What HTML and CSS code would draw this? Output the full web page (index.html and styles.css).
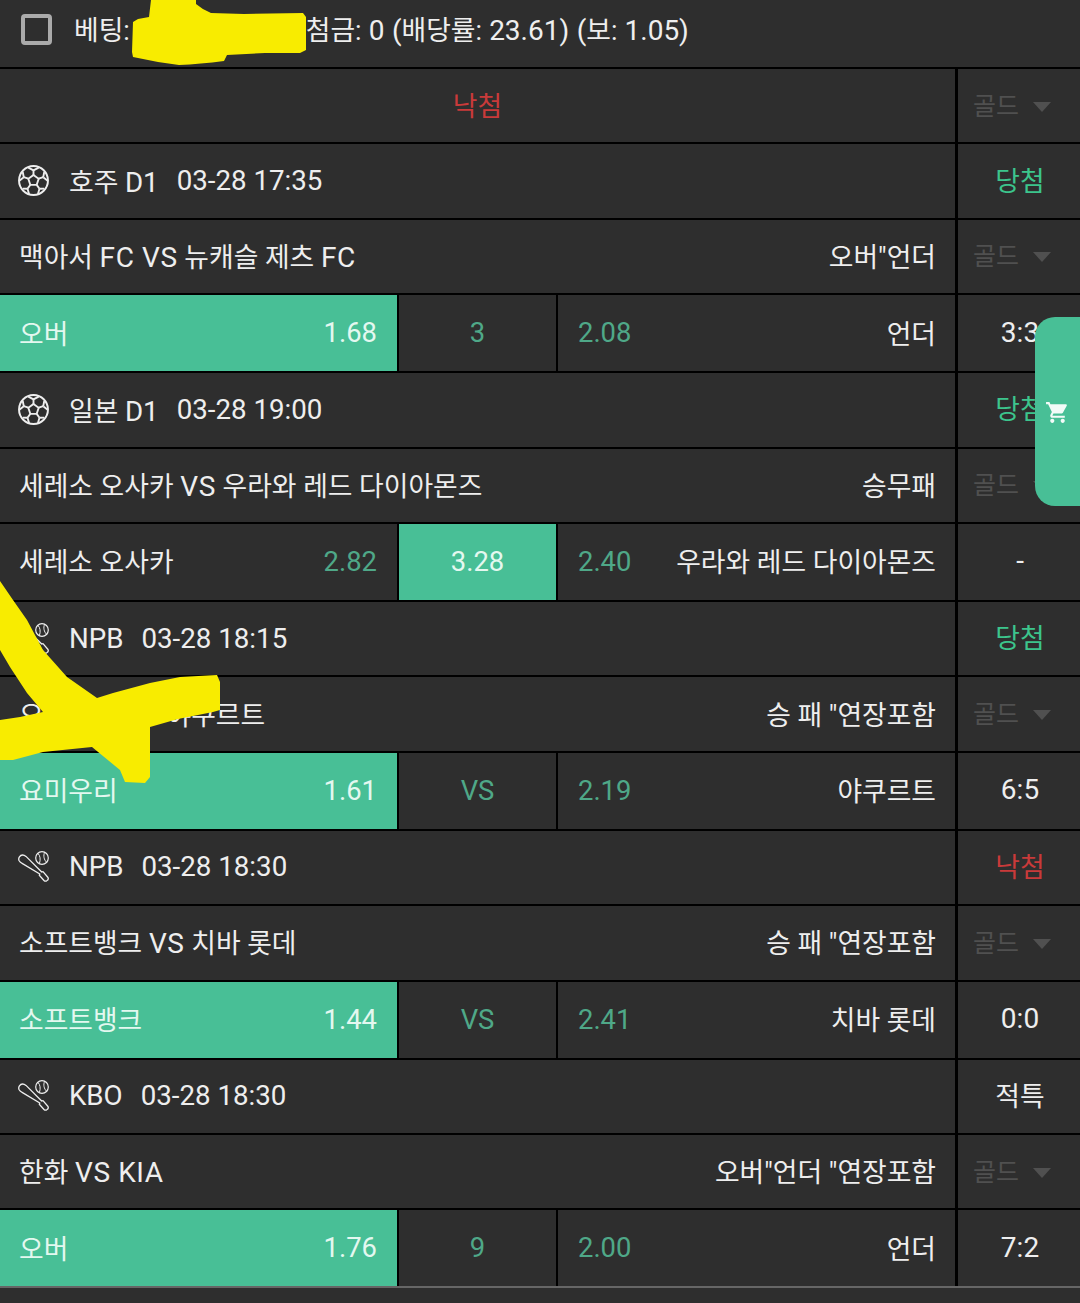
FILE: index.html
```html
<!DOCTYPE html>
<html lang="ko">
<head>
    <meta charset="UTF-8">
    <meta name="viewport" content="width=device-width, initial-scale=1.0">
    <title>베팅 내역</title>
    <link rel="stylesheet" href="styles.css">
</head>
<body>
    <svg width="0" height="0" class="defs">
        <defs>
            <symbol id="icon-soccer" viewBox="0 0 30 30">
                <circle cx="15" cy="15" r="14" fill="none" stroke="currentColor" stroke-width="1.9"/>
                <path d="M15 9.6l5 3.7-1.9 5.900h-6.200L10 13.300z" fill="none" stroke="currentColor" stroke-width="1.8"/>
                <path d="M15 9.600V5.200M20 13.300l4.400-1.500M18.100 19.200l2.700 3.800M11.900 19.200l-2.700 3.800M10 13.300l-4.400-1.500" fill="none" stroke="currentColor" stroke-width="1.800"/>
                <path d="M10 2.600l5 2.600 5-2.600M24.400 11.800l1-5M24.400 11.800l4.300 3.400M20.800 23l4.600-.2M20.800 23l-1.500 5M9.200 23l1.500 5M9.200 23l-4.600-.2M5.600 11.800l-1-5M5.600 11.800L1.300 15.200" fill="none" stroke="currentColor" stroke-width="1.800"/>
            </symbol>
            <symbol id="icon-baseball" viewBox="0 0 31 31">
                <circle cx="24" cy="7" r="6.300" fill="none" stroke="currentColor" stroke-width="1.200"/>
                <path d="M20 2.400c2.200 2.400 2.800 6 1.400 10.200M26.600 1.300c-1.400 3.400-.8 7.400 2.200 10.200" fill="none" stroke="currentColor" stroke-width="1"/>
                <path d="M1 9.500C0 7 2 4 4.500 4 6 4 7 4.600 8 5.400L23.700 21l1.300-.4 5 5.900c.5 1 0 2.500-1.300 3.300-1.200.6-2.200.2-2.700-.3l-4.700-5.200.5-1.300L4.500 12.600C3 11.800 1.700 11 1 9.500z" fill="none" stroke="currentColor" stroke-width="1.300" stroke-linejoin="round"/>
            </symbol>
        </defs>
    </svg>

    <div class="list">
        <div class="top-row">
            <span class="checkbox"></span>
            <span class="top-label">베팅:</span>
            <span class="top-hidden"></span>
            <span>첨금: <span class="n">0 (</span>배당률: <span class="n">23.61) (</span>보: <span class="n">1.05)</span></span>
        </div>

        <div class="row">
            <div class="main center lost">낙첨</div>
            <div class="side gold">골드<i class="caret"></i></div>
        </div>

        <div class="row">
            <div class="main info"><svg class="icon"><use href="#icon-soccer"/></svg><span class="league">호주 <span class="n">D1</span></span><span class="n">03-28 17:35</span></div>
            <div class="side won">당첨</div>
        </div>
        <div class="row">
            <div class="main title"><span>맥아서 <span class="n">FC VS</span> 뉴캐슬 제츠 <span class="n">FC</span></span><span>오버"언더</span></div>
            <div class="side gold">골드<i class="caret"></i></div>
        </div>
        <div class="row bet">
            <div class="main">
                <div class="pick home selected"><span>오버</span><span class="n">1.68</span></div>
                <div class="pick mid n">3</div>
                <div class="pick away"><span class="odds n">2.08</span><span>언더</span></div>
            </div>
            <div class="side n">3:3</div>
        </div>

        <div class="row">
            <div class="main info"><svg class="icon"><use href="#icon-soccer"/></svg><span class="league">일본 <span class="n">D1</span></span><span class="n">03-28 19:00</span></div>
            <div class="side won">당첨</div>
        </div>
        <div class="row">
            <div class="main title"><span>세레소 오사카 <span class="n">VS</span> 우라와 레드 다이아몬즈</span><span>승무패</span></div>
            <div class="side gold">골드<i class="caret"></i></div>
        </div>
        <div class="row bet">
            <div class="main">
                <div class="pick home"><span>세레소 오사카</span><span class="odds n">2.82</span></div>
                <div class="pick mid n selected">3.28</div>
                <div class="pick away"><span class="odds n">2.40</span><span>우라와 레드 다이아몬즈</span></div>
            </div>
            <div class="side n">-</div>
        </div>

        <div class="row">
            <div class="main info"><svg class="icon"><use href="#icon-baseball"/></svg><span class="league n">NPB</span><span class="n">03-28 18:15</span></div>
            <div class="side won">당첨</div>
        </div>
        <div class="row">
            <div class="main title"><span>요미우리 <span class="n">VS</span> 야쿠르트</span><span>승 패 "연장포함</span></div>
            <div class="side gold">골드<i class="caret"></i></div>
        </div>
        <div class="row bet">
            <div class="main">
                <div class="pick home selected"><span>요미우리</span><span class="n">1.61</span></div>
                <div class="pick mid n">VS</div>
                <div class="pick away"><span class="odds n">2.19</span><span>야쿠르트</span></div>
            </div>
            <div class="side n">6:5</div>
        </div>

        <div class="row">
            <div class="main info"><svg class="icon"><use href="#icon-baseball"/></svg><span class="league n">NPB</span><span class="n">03-28 18:30</span></div>
            <div class="side lost">낙첨</div>
        </div>
        <div class="row">
            <div class="main title"><span>소프트뱅크 <span class="n">VS</span> 치바 롯데</span><span>승 패 "연장포함</span></div>
            <div class="side gold">골드<i class="caret"></i></div>
        </div>
        <div class="row bet">
            <div class="main">
                <div class="pick home selected"><span>소프트뱅크</span><span class="n">1.44</span></div>
                <div class="pick mid n">VS</div>
                <div class="pick away"><span class="odds n">2.41</span><span>치바 롯데</span></div>
            </div>
            <div class="side n">0:0</div>
        </div>

        <div class="row">
            <div class="main info"><svg class="icon"><use href="#icon-baseball"/></svg><span class="league n">KBO</span><span class="n">03-28 18:30</span></div>
            <div class="side">적특</div>
        </div>
        <div class="row">
            <div class="main title"><span>한화 <span class="n">VS KIA</span></span><span>오버"언더 "연장포함</span></div>
            <div class="side gold">골드<i class="caret"></i></div>
        </div>
        <div class="row bet last">
            <div class="main">
                <div class="pick home selected"><span>오버</span><span class="n">1.76</span></div>
                <div class="pick mid n">9</div>
                <div class="pick away"><span class="odds n">2.00</span><span>언더</span></div>
            </div>
            <div class="side n">7:2</div>
        </div>
    </div>

    <div class="cart-tab">
        <svg class="cart-icon" viewBox="0 0 24 24"><path d="M7 18c-1.100 0-1.990.9-1.990 2S5.900 22 7 22s2-.9 2-2-.9-2-2-2zM1 2v2h2l3.600 7.590-1.350 2.450c-.16.28-.25.61-.25.96 0 1.100.9 2 2 2h12v-2H7.420c-.14 0-.25-.11-.25-.25l.03-.12.9-1.630h7.450c.75 0 1.410-.41 1.750-1.030l3.580-6.490c.08-.14.12-.31.12-.48 0-.55-.45-1-1-1H5.210l-.94-2H1zm16 16c-1.100 0-1.990.9-1.990 2s.89 2 1.990 2 2-.9 2-2-.9-2-2-2z"/></svg>
    </div>

    <!-- yellow marker drawn over the screenshot -->
    <svg class="scribble" viewBox="0 0 1080 1303">
        <path d="M151 0L196 0L196 4Q203 10 211 13L244 14L303 13L306 17L306 50L300 53L265 53L227 55L224 61Q200 64 179 65Q155 62 133 57L132 52L133 22L138 19L149 17Z"/>
        <path d="M0 581L13 600L27 620L43 650L67 677L97 698L113 693L150 683L180 677L217 675L220 682L220 710L213 712L178 719L150 727L150 743L150 777L145 783L125 782L120 770L92 747L43 752L13 760L0 760L0 720L20 717L43 712L27 693L10 667L0 650Z"/>
    </svg>
</body>
</html>
```

FILE: styles.css
```css
body {
    margin: 0;
    background-color: #2e2e2e;
    color: #eeeeee;
    font-family: Roboto, "Noto Sans CJK KR", sans-serif;
    font-size: 26.8px;
    height: 1303px;
    position: relative;
    overflow: hidden;
}
.n {
    font-size: 28px;
}
.defs {
    position: absolute;
}
.top-row {
    display: flex;
    align-items: center;
    height: 67px;
    border-bottom: 2px solid #000;
    word-spacing: .5px;
}
.checkbox {
    width: 31px;
    height: 31px;
    box-sizing: border-box;
    border: 4px solid #aaaaaa;
    border-radius: 4px;
    margin-left: 21px;
    margin-right: 22px;
    margin-bottom: 8px;
}
.top-row > span:not(.checkbox) {
    margin-bottom: 10px;
}
.top-hidden {
    width: 176px;
}
.row {
    display: flex;
    height: 75.4px;
    box-sizing: border-box;
    border-bottom: 2px solid #000;
}
.row.bet {
    height: 78px;
}
.row.last {
    border-bottom-color: #666666;
}
.main {
    width: 955px;
    box-sizing: border-box;
    display: flex;
    align-items: center;
}
.main.center {
    justify-content: center;
    padding-bottom: 3px;
}
.side {
    width: 125px;
    box-sizing: border-box;
    border-left: 3px solid #000;
    display: flex;
    align-items: center;
    justify-content: center;
    padding: 0 0 4px 2px;
}
.side.n {
    padding-bottom: 2px;
}
.lost {
    color: #c93a3a;
}
.won {
    color: #3cc58c;
}
.gold {
    color: #505050;
    font-size: 25px;
    justify-content: flex-start;
    padding-left: 15px;
}
.caret {
    width: 0;
    height: 0;
    border-left: 9px solid transparent;
    border-right: 9px solid transparent;
    border-top: 10px solid #505050;
    margin-left: 14px;
    margin-top: 6px;
}
.info {
    padding-left: 18px;
    padding-bottom: 1px;
}
.info .n {
    font-size: 27.7px;
}
.icon {
    width: 31px;
    height: 31px;
    margin-right: 20px;
}
.league {
    margin-right: 18px;
}
.title {
    justify-content: space-between;
    padding: 0 19px 2px 19px;
}
.title .n {
    letter-spacing: .6px;
}
.pick {
    height: 100%;
    box-sizing: border-box;
    display: flex;
    align-items: center;
    justify-content: space-between;
    padding: 0 20px 2px;
}
.pick .n {
    font-size: 27.4px;
    margin-top: 2px;
}
.pick.n {
    font-size: 27.4px;
    padding-bottom: 0;
}
.home {
    width: 399px;
    border-right: 2px solid #000;
    padding-left: 19px;
}
.mid {
    width: 159px;
    border-right: 2px solid #000;
    justify-content: center;
    color: #4fa888;
}
.away {
    flex: 1;
    padding-right: 19px;
}
.odds {
    color: #4fa888;
}
.selected {
    background-color: #48bf96;
    color: #e4f8f0;
}
.cart-tab {
    position: absolute;
    top: 317px;
    right: 0;
    width: 45px;
    height: 189px;
    background-color: #48bf96;
    border-radius: 20px 0 0 20px;
}
.cart-icon {
    position: absolute;
    top: 83px;
    left: 10px;
    width: 25px;
    height: 25px;
    fill: #f2fbf8;
}
.scribble {
    position: absolute;
    top: 0;
    left: 0;
    width: 1080px;
    height: 1303px;
    fill: #f8ec00;
    pointer-events: none;
}
```
